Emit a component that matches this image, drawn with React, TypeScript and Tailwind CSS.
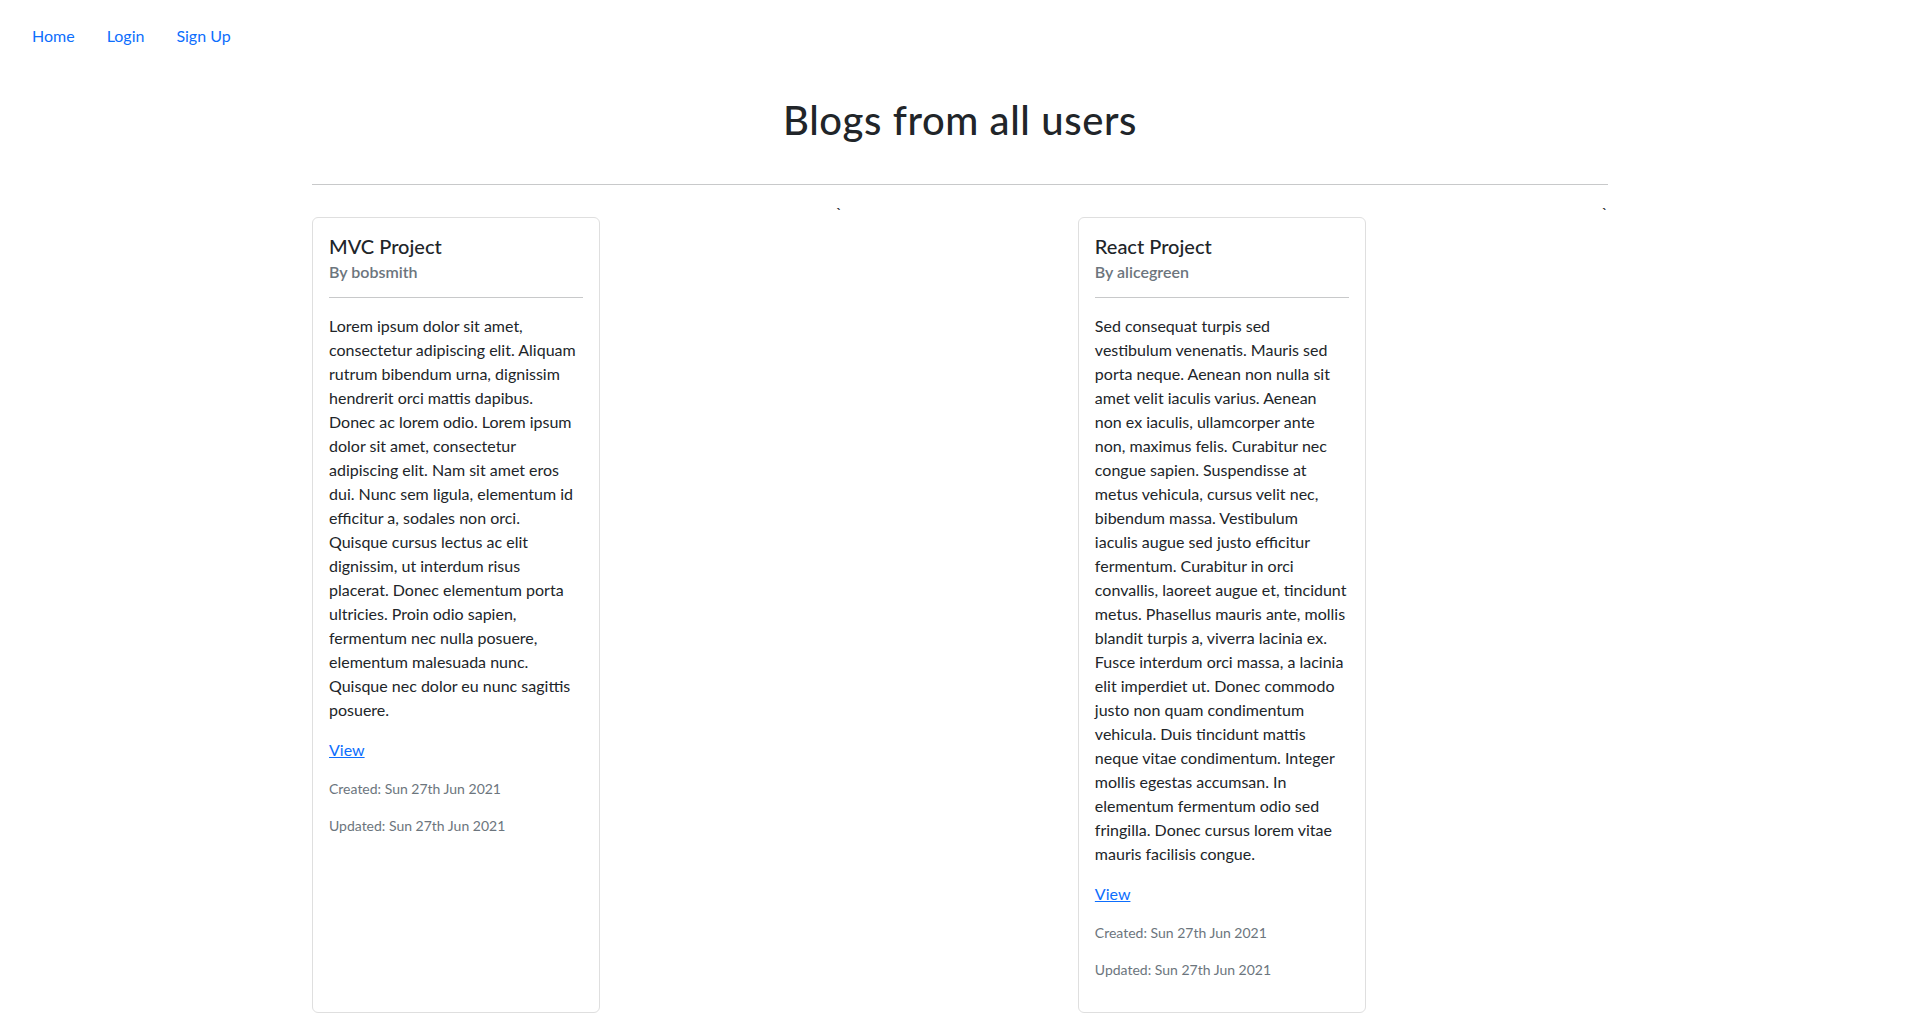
import React from 'react';

// body text is kept as the lines it wraps to on the original page
const blogs = [
    {
        id: 1,
        title: 'MVC Project',
        author: 'bobsmith',
        lines: [
            'Lorem ipsum dolor sit amet,',
            'consectetur adipiscing elit. Aliquam',
            'rutrum bibendum urna, dignissim',
            'hendrerit orci mattis dapibus.',
            'Donec ac lorem odio. Lorem ipsum',
            'dolor sit amet, consectetur',
            'adipiscing elit. Nam sit amet eros',
            'dui. Nunc sem ligula, elementum id',
            'efficitur a, sodales non orci.',
            'Quisque cursus lectus ac elit',
            'dignissim, ut interdum risus',
            'placerat. Donec elementum porta',
            'ultricies. Proin odio sapien,',
            'fermentum nec nulla posuere,',
            'elementum malesuada nunc.',
            'Quisque nec dolor eu nunc sagittis',
            'posuere.'
        ],
        created: 'Sun 27th Jun 2021',
        updated: 'Sun 27th Jun 2021'
    },
    {
        id: 2,
        title: 'React Project',
        author: 'alicegreen',
        lines: [
            'Sed consequat turpis sed',
            'vestibulum venenatis. Mauris sed',
            'porta neque. Aenean non nulla sit',
            'amet velit iaculis varius. Aenean',
            'non ex iaculis, ullamcorper ante',
            'non, maximus felis. Curabitur nec',
            'congue sapien. Suspendisse at',
            'metus vehicula, cursus velit nec,',
            'bibendum massa. Vestibulum',
            'iaculis augue sed justo efficitur',
            'fermentum. Curabitur in orci',
            'convallis, laoreet augue et, tincidunt',
            'metus. Phasellus mauris ante, mollis',
            'blandit turpis a, viverra lacinia ex.',
            'Fusce interdum orci massa, a lacinia',
            'elit imperdiet ut. Donec commodo',
            'justo non quam condimentum',
            'vehicula. Duis tincidunt mattis',
            'neque vitae condimentum. Integer',
            'mollis egestas accumsan. In',
            'elementum fermentum odio sed',
            'fringilla. Donec cursus lorem vitae',
            'mauris facilisis congue.'
        ],
        created: 'Sun 27th Jun 2021',
        updated: 'Sun 27th Jun 2021'
    }
];

type Blog = (typeof blogs)[number];

const BlogCard: React.FC<{ blog: Blog }> = ({ blog }) => {
    return (
        <div className="mt-4 w-[288px] rounded-[6px] border border-[#dfdfdf] bg-white">
            <div className="p-4">
                <h5 className="mb-2 text-[20px] font-medium leading-[1.2] text-[#212529]">{blog.title}</h5>
                <h6 className="-mt-1 text-[16px] font-semibold leading-[1.2] text-[#6c757d]">By {blog.author}</h6>
                <hr className="my-4 border-t border-[#c8c9ca]" />
                <p className="mb-4 whitespace-nowrap">
                    {blog.lines.map((line, i) => (
                        <React.Fragment key={i}>
                            {line}
                            {i < blog.lines.length - 1 && <br />}
                        </React.Fragment>
                    ))}
                </p>
                <p className="mb-4">
                    <a href="#" className="text-[#0d6efd] underline">View</a>
                </p>
                <p className="mb-4 text-[14px] leading-[21px] text-[#6c757d]">Created: {blog.created}</p>
                <p className="mb-4 text-[14px] leading-[21px] text-[#6c757d]">Updated: {blog.updated}</p>
            </div>
        </div>
    );
};

const App: React.FC = () => {
    return (
        <div className="min-h-screen bg-white font-['Lato','Open_Sans',sans-serif] text-[16px] leading-6 text-[#212529]">
            {/* Top nav */}
            <nav className="flex px-4 pt-6">
                <a href="#" className="px-4 text-[#0d6efd]">Home</a>
                <a href="#" className="px-4 text-[#0d6efd]">Login</a>
                <a href="#" className="px-4 text-[#0d6efd]">Sign Up</a>
            </nav>

            <div className="mx-auto w-[1320px] px-3">
                <h1 className="mt-12 text-center text-[40px] font-medium leading-[48px] tracking-[0.6px]">Blogs from all users</h1>
                <hr className="mt-10 mb-4 border-t border-[#c8c9ca]" />

                {/* cards, each followed by a stray backtick from the template */}
                <div className="flex justify-between">
                    {blogs.map((blog) => (
                        <React.Fragment key={blog.id}>
                            <BlogCard blog={blog} />
                            <span>`</span>
                        </React.Fragment>
                    ))}
                </div>
            </div>
        </div>
    );
};

export default App;
